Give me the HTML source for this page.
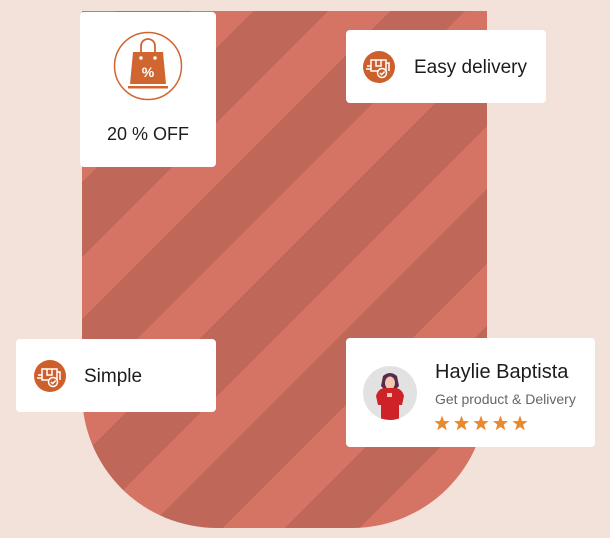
<!DOCTYPE html>
<html><head><meta charset="utf-8"><style>
*{margin:0;padding:0;box-sizing:border-box}
body{width:610px;height:538px;background:#f3e2d9;position:relative;overflow:hidden;font-family:"Liberation Sans",Roboto,sans-serif;color:#1c1c1c}
.shape{position:absolute;left:82px;top:11px;width:405px;height:517px;border-radius:0 0 135px 135px;
background:repeating-linear-gradient(135deg,#d57464 0 24px,#bf6758 24px 77px,#d57464 77px 97px)}
.card{position:absolute;background:#fff;border-radius:4px}
.ic{position:absolute;width:34px;height:34px}
.t{position:absolute;font-size:19px;white-space:nowrap}
</style></head><body>
<div class="shape"></div>

<div class="card" style="left:80px;top:12px;width:136px;height:155px">
<svg style="position:absolute;left:33px;top:19px" width="70" height="70" viewBox="0 0 70 70">
<circle cx="35" cy="35" r="33.5" fill="none" stroke="#d0652f" stroke-width="1.5"/>
<path d="M28 26 V15 a7 7 0 0 1 14 0 V26" fill="none" stroke="#d0652f" stroke-width="1.8"/>
<path d="M20 21 H50 L53 53 H17 Z" fill="#d0652f"/>
<rect x="15" y="55" width="40" height="2.5" fill="#d0652f"/>
<circle cx="28" cy="27" r="2.5" fill="#fff" stroke="#d0652f" stroke-width="1.5"/>
<circle cx="42" cy="27" r="2.5" fill="#fff" stroke="#d0652f" stroke-width="1.5"/>
<text x="35" y="46" text-anchor="middle" font-family="Liberation Sans" font-weight="bold" font-size="14" fill="#fff">%</text>
</svg>
<div class="t" style="left:27px;top:112px;font-size:18px">20 % OFF</div>
</div>

<div class="card" style="left:346px;top:30px;width:200px;height:73px">
<svg class="ic" style="left:16px;top:20px" viewBox="0 0 34 34"><circle cx="17" cy="17" r="16" fill="#cc5f2c"/><g fill="none" stroke="#fff" stroke-width="1.5"><path d="M9 10h15v11H9z M14 10v6h5v-6"/><path d="M24 13h3v8"/><path d="M5 16h4 M4 19h5"/><circle cx="20" cy="23" r="4.5" fill="#cc5f2c"/><path d="M18 23l1.6 1.6 3-3"/></g></svg>
<div class="t" style="left:68px;top:27px">Easy delivery</div>
</div>

<div class="card" style="left:16px;top:339px;width:200px;height:73px">
<svg class="ic" style="left:17px;top:20px" viewBox="0 0 34 34"><circle cx="17" cy="17" r="16" fill="#cc5f2c"/><g fill="none" stroke="#fff" stroke-width="1.5"><path d="M9 10h15v11H9z M14 10v6h5v-6"/><path d="M24 13h3v8"/><path d="M5 16h4 M4 19h5"/><circle cx="20" cy="23" r="4.5" fill="#cc5f2c"/><path d="M18 23l1.6 1.6 3-3"/></g></svg>
<div class="t" style="left:68px;top:27px">Simple</div>
</div>

<div class="card" style="left:346px;top:338px;width:249px;height:109px">
<svg style="position:absolute;left:17px;top:28px" width="54" height="54" viewBox="0 0 54 54">
<defs><clipPath id="c"><circle cx="27" cy="27" r="27"/></clipPath></defs>
<circle cx="27" cy="27" r="27" fill="#e2e2e2"/>
<g clip-path="url(#c)">
<path d="M20 10 q7-6 14 0 l2 10 -4 4 h-10 l-4-4z" fill="#5a2a4a"/>
<ellipse cx="27" cy="17" rx="5" ry="6.5" fill="#f0c9b0"/>
<path d="M13 30 q2-7 8-8 h12 q6 1 8 8 l-2 9 -3 0 0 15 h-18 v-15 l-3 0z" fill="#cc2228"/>
<rect x="24" y="27" width="5" height="4" fill="#f0c9b0"/>
</g></svg>
<div class="t" style="left:89px;top:23px;font-size:20px">Haylie Baptista</div>
<div class="t" style="left:89px;top:53px;font-size:14px;color:#666">Get product &amp; Delivery</div>
<svg style="position:absolute;left:88px;top:77px" width="96" height="17" viewBox="0 0 96 17">
<defs><path id="s" d="M8 0.5 L10 6 L15.6 6.1 L11.2 9.6 L12.8 15.3 L8 12 L3.2 15.3 L4.8 9.6 L0.4 6.1 L6 6 Z" fill="#ea8a30"/></defs>
<use href="#s" x="0"/><use href="#s" x="19.5"/><use href="#s" x="39"/><use href="#s" x="58.5"/><use href="#s" x="78"/>
</svg>
</div>
</body></html>
